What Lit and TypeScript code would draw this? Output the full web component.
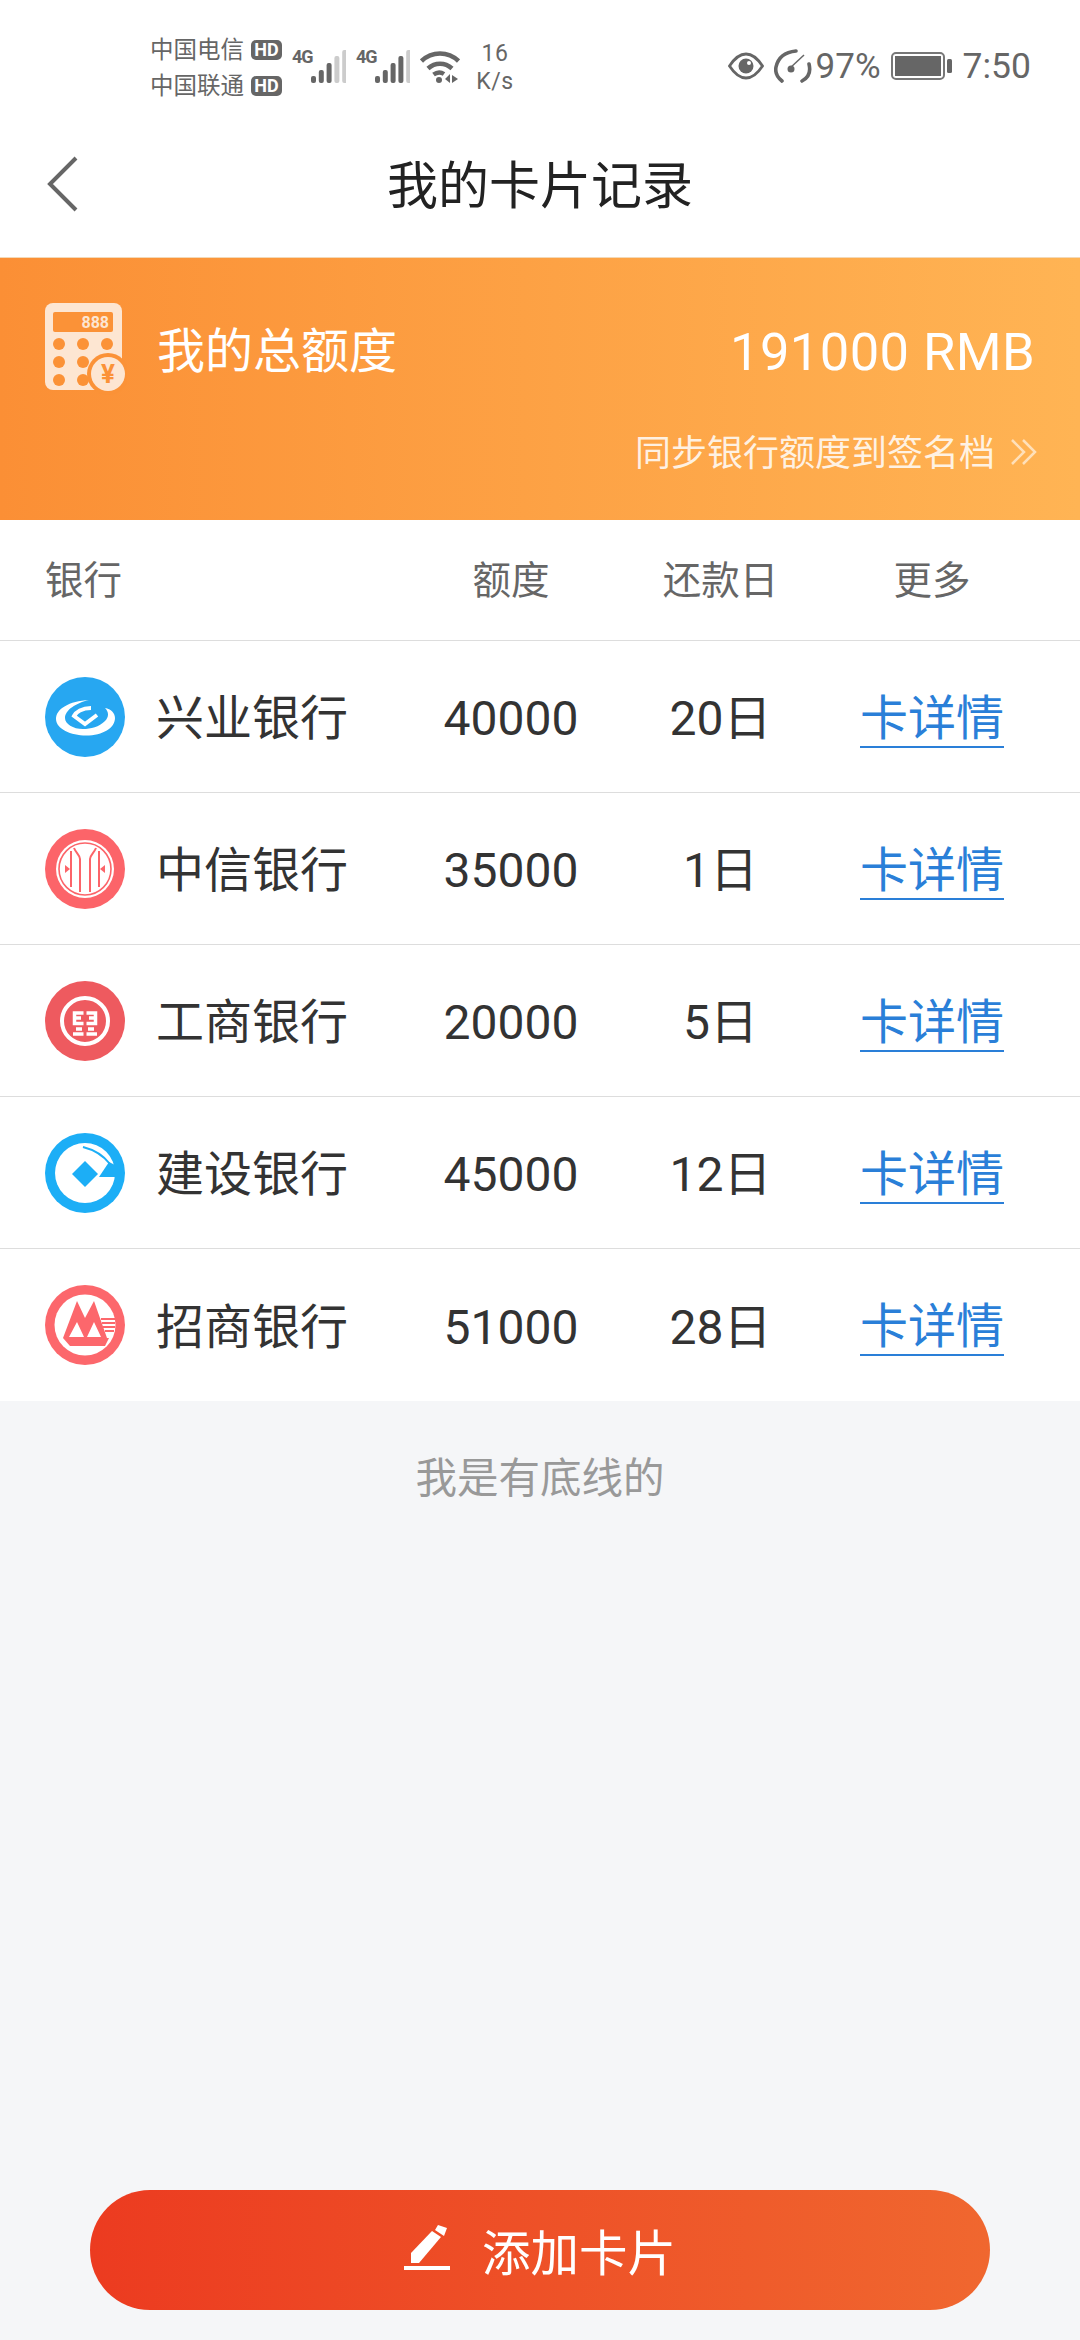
import { LitElement, html, css, svg } from "lit";
import { customElement } from "lit/decorators.js";

const ICONS: Record<string, unknown> = {
  xy: svg`<circle cx="40" cy="40" r="40" fill="#27a7f1"/>
    <path fill="#fff" d="M44 23C24 24 11 32 11 42C11 52 26 58.500 41 58.500C58 58.500 70 51 70 41C70 36 66 32 60 31C64 35 64 40 60 44C54 50 46 52 38 52C28 52 20 47 20 41C20 33 31 26 44 23Z"/>
    <path fill="none" stroke="#fff" stroke-width="4" d="M46 31C37 31 31 35 29 39L40 47L52 38"/>`,
  zx: svg`<circle cx="40" cy="40" r="40" fill="#fc6469"/>
    <circle cx="40" cy="40" r="29" fill="#fff"/>
    <circle cx="40" cy="40" r="26" fill="none" stroke="#fc6469" stroke-width="1.600"/>
    <g fill="none" stroke="#fc6469" stroke-width="2"><path d="M26 22V58M35 63V30C35 26 31 24 29 19M45 63V30C45 26 49 24 51 19M54 22V58"/></g>
    <path fill="#fc6469" d="M20 36L25 40L20 44ZM60 36L55 40L60 44Z"/>`,
  gs: svg`<circle cx="40" cy="40" r="40" fill="#ee5a5f"/>
    <circle cx="40" cy="40" r="23" fill="none" stroke="#fff" stroke-width="4"/>
    <g fill="none" stroke="#fff" stroke-width="3.500"><path d="M38.500 32H29.500V42.500H38.500M28 53H38.500M41.500 32H50.500V42.500H41.500M52 53H41.500M29.500 37H36M50.500 37H44M31 48H37M49 48H43"/></g>`,
  js: svg`<circle cx="40" cy="40" r="40" fill="#1caef6"/>
    <circle cx="40" cy="40" r="30" fill="#fff"/>
    <path fill="#1caef6" d="M40 28L53 41L40 54L27 41Z"/>
    <path fill="#1caef6" d="M54 44L64 29L72 33L72 44Z"/>
    <path fill="none" stroke="#1caef6" stroke-width="2" d="M38 14C50 17 58 22 65 31"/>`,
  zs: svg`<circle cx="40" cy="40" r="40" fill="#fc676c"/>
    <circle cx="40" cy="40" r="30.500" fill="#fff"/>
    <path fill="#fc676c" d="M32 16L40 33L49 16L62 53L64 53L60 61H25L18 53Z"/>
    <path fill="#fff" d="M24 52L32 37L39 52ZM42 52L49 37L56 52Z"/>
    <path fill="#fc676c" d="M56 33H70V35H56ZM57 37H70V39H57ZM58 41H70V43H58ZM60 45H69V47H60Z"/>`,
};

const ROWS = [
  ["xy", "兴业银行", "40000", "20日"],
  ["zx", "中信银行", "35000", "1日"],
  ["gs", "工商银行", "20000", "5日"],
  ["js", "建设银行", "45000", "12日"],
  ["zs", "招商银行", "51000", "28日"],
];

const bars = (dark: number) => svg`
  <svg class="bars" width="35" height="33" viewBox="0 0 35 33">
    ${[7, 13, 20, 27, 33].map(
      (v, i) => svg`<rect x="${i * 7.8}" y="${33 - v}" width="5" height="${v}" rx="2" fill="${i >= dark ? "#ccc" : "#666"}"/>`
    )}
  </svg>`;

@customElement("app-root")
export class AppRoot extends LitElement {
  static styles = css`
    :host {
      display: block;
      width: 1080px;
      font-family: Roboto, "Noto Sans CJK SC", sans-serif;
    }
    .page {
      width: 1080px;
      height: 2340px;
      background: #f5f6f8;
      display: flex;
      flex-direction: column;
    }
    .top { background: #fff; }
    .status {
      height: 92px;
      padding: 20px 49px 0 150px;
      display: flex;
      align-items: center;
      color: #666;
    }
    .carriers { display: flex; flex-direction: column; gap: 11px; font-size: 23.500px; line-height: 25px; margin-top: 4px; }
    .carrier { display: flex; align-items: center; gap: 7px; white-space: nowrap; }
    .hd {
      background: #666; color: #fff; font-size: 18px; font-weight: 700;
      width: 31px; height: 20px; line-height: 20px; text-align: center; border-radius: 5px;
    }
    .net { display: flex; align-items: flex-start; margin-left: 10px; height: 33px; }
    .g4 { font-size: 18px; font-weight: 700; line-height: 14px; width: 19px; letter-spacing: -1.200px; white-space: nowrap; }
    .bars { display: block; }
    .wifi { margin-left: 10px; display: block; }
    .speed { width: 44px; margin: 4px 0 0 13px; text-align: center; font-size: 23px; line-height: 28px; letter-spacing: 0.5px; }
    .spacer { flex: 1; }
    .eye { display: block; }
    .gauge { display: block; margin-left: 10px; }
    .pct { font-size: 35px; margin-left: 4px; }
    .battery { display: block; margin-left: 10px; }
    .time { font-size: 35.500px; margin-left: 11px; }
    .nav {
      height: 145px;
      box-sizing: border-box;
      padding-bottom: 6px;
      position: relative;
      display: flex;
      align-items: center;
      justify-content: center;
      font-size: 51px;
      color: #222;
    }
    .back { position: absolute; left: 46px; top: 44px; }
    .banner {
      height: 263px;
      border-top: 1px solid #f3d9b8;
      box-sizing: border-box;
      background: linear-gradient(90deg, #fb8f35, #ffb454);
      color: #fff;
      padding: 45px 45px 0 45px;
      display: flex;
      flex-direction: column;
    }
    .b-top { display: flex; align-items: center; height: 92px; }
    .b-label { font-size: 48px; margin-left: 30px; flex: 1; margin-top: -4px; }
    .b-amount { font-size: 52.500px; margin-top: 6px; letter-spacing: 0.4px; }
    .b-sync {
      margin-top: 34px;
      display: flex;
      justify-content: flex-end;
      align-items: center;
      gap: 14px;
      font-size: 36px;
      line-height: 50px;
      color: rgba(255, 255, 255, 0.85);
    }
    .b-sync svg { margin-right: -4px; margin-top: -4px; }
    .row {
      display: grid;
      grid-template-columns: 361px 210px 209px 214px;
      align-items: center;
      padding-left: 45px;
      background: #fff;
      box-sizing: border-box;
    }
    .head { height: 121px; color: #666; font-size: 38.500px; border-bottom: 1px solid #ddd; line-height: 50px; padding-top: 2px; }
    .item { height: 152px; font-size: 48px; color: #333; border-bottom: 1px solid #ddd; line-height: 56px; }
    .item.last { border-bottom: 0; }
    .item .c, .label { padding-top: 5px; }
    .c { text-align: center; }
    .name { display: flex; align-items: center; gap: 31px; }
    .logo { display: block; flex: none; }
    .link { display: inline-block; color: #2a7fd8; line-height: 54px; border-bottom: 2px solid #2a7fd8; }
    .end { margin-top: 52px; text-align: center; color: #999; font-size: 41.500px; line-height: 52px; }
    .add {
      margin: 0 90px 30px;
      height: 120px;
      border-radius: 60px;
      background: linear-gradient(90deg, #ec3b20, #f0672f);
      display: flex;
      align-items: center;
      justify-content: center;
      gap: 32px;
      color: #fff;
      font-size: 48.500px;
    }
    .add svg { margin-top: -4px; }
  `;

  render() {
    return html`<div class="page">
      <div class="top">
        <div class="status">
          <div class="carriers">
            <div class="carrier">中国电信<span class="hd">HD</span></div>
            <div class="carrier">中国联通<span class="hd">HD</span></div>
          </div>
          <div class="net"><span class="g4">4G</span>${bars(3)}</div>
          <div class="net"><span class="g4">4G</span>${bars(4)}</div>
          <svg class="wifi" width="40" height="33" viewBox="0 0 40 33">
            <g fill="none" stroke="#666" stroke-width="4.500"><path d="M1.500 11C12 1 28 1 38.500 11"/><path d="M8 18.500C15 12 25 12 32 18.500"/><path d="M13.500 24.500C17 22 21 22 24 24"/></g>
            <circle cx="19" cy="30" r="3" fill="#666"/><path fill="#666" d="M30 24V33L25 29ZM32 25L38 29L32 33Z"/>
          </svg>
          <div class="speed">16<br />K/s</div>
          <div class="spacer"></div>
          <svg class="eye" width="36" height="28" viewBox="0 0 36 28">
            <path d="M1.500 14C8 4 13 2 18 2S28 4 34.500 14C28 24 23 26 18 26S8 24 1.500 14Z" fill="none" stroke="#666" stroke-width="2.800"/>
            <circle cx="18" cy="14" r="7.500" fill="#666"/><circle cx="21" cy="11" r="2" fill="#fff"/>
          </svg>
          <svg class="gauge" width="38" height="34" viewBox="0 0 38 34">
            <g fill="none" stroke="#666" stroke-width="3.600" stroke-linecap="round">
              <path d="M8 32C3 28 1 23 2 18C4 9 11 3 22 2"/><path d="M28 32C34 29 37 23 35 15"/>
            </g>
            <path d="M15 20L30 6" stroke="#666" stroke-width="1.500"/><circle cx="17" cy="20" r="3.500" fill="#666"/>
          </svg>
          <span class="pct">97%</span>
          <svg class="battery" width="61" height="28" viewBox="0 0 61 28">
            <rect x="1" y="1" width="52" height="26" rx="4" fill="none" stroke="#777" stroke-width="2"/>
            <rect x="4" y="4" width="46" height="20" fill="#666"/>
            <rect x="56" y="7" width="5" height="14" rx="1.500" fill="#666"/>
          </svg>
          <span class="time">7:50</span>
        </div>
        <div class="nav">
          <svg class="back" width="34" height="56" viewBox="0 0 34 56"><path d="M30 2L4 28L30 54" fill="none" stroke="#666" stroke-width="4"/></svg>
          我的卡片记录
        </div>
      </div>
      <div class="banner">
        <div class="b-top">
          <svg width="82" height="92" viewBox="0 0 82 92">
            <rect y="0" width="77" height="87" rx="8" fill="#fde6d2"/>
            <rect x="8" y="9" width="60" height="20" rx="2" fill="#fb9237"/>
            <text x="64" y="25" text-anchor="end" font-size="16" font-weight="700" fill="#fde6d2" font-family="Roboto">888</text>
            ${[14, 38, 62].map((x) => [41, 59, 77].map((y) => svg`<circle cx="${x}" cy="${y}" r="6" fill="#fb9237"/>`))}
            <circle cx="63" cy="71" r="21" fill="#fb9237"/><circle cx="63" cy="71" r="17" fill="#fde6d2"/>
            <text x="63" y="80" text-anchor="middle" font-size="26" font-weight="700" fill="#fb9237" font-family="Roboto">¥</text>
          </svg>
          <div class="b-label">我的总额度</div>
          <div class="b-amount">191000 RMB</div>
        </div>
        <div class="b-sync">同步银行额度到签名档
          <svg width="30" height="30" viewBox="0 0 30 30"><g fill="none" stroke="#fff" stroke-opacity=".6" stroke-width="2.500"><path d="M3 3L15 15L3 27M14 3L26 15L14 27"/></g></svg>
        </div>
      </div>
      <div class="row head">
        <div>银行</div><div class="c">额度</div><div class="c">还款日</div><div class="c">更多</div>
      </div>
      ${ROWS.map(
        (r, i) => html`<div class="row item ${i === ROWS.length - 1 ? "last" : ""}">
          <div class="name"><svg class="logo" width="80" height="80" viewBox="0 0 80 80">${ICONS[r[0]]}</svg><span class="label">${r[1]}</span></div>
          <div class="c">${r[2]}</div>
          <div class="c">${r[3]}</div>
          <div class="c"><span class="link">卡详情</span></div>
        </div>`
      )}
      <div class="end">我是有底线的</div>
      <div class="spacer"></div>
      <div class="add">
        <svg width="46" height="46" viewBox="0 0 46 46">
          <path fill="#fff" d="M7 38L7 28L28 6L37 12L15 38Z"/><path fill="#fff" d="M34 0L43 3L40 11L31 5Z"/>
          <rect y="41" width="46" height="4" fill="#fff"/>
        </svg>
        添加卡片
      </div>
    </div>`;
  }
}
